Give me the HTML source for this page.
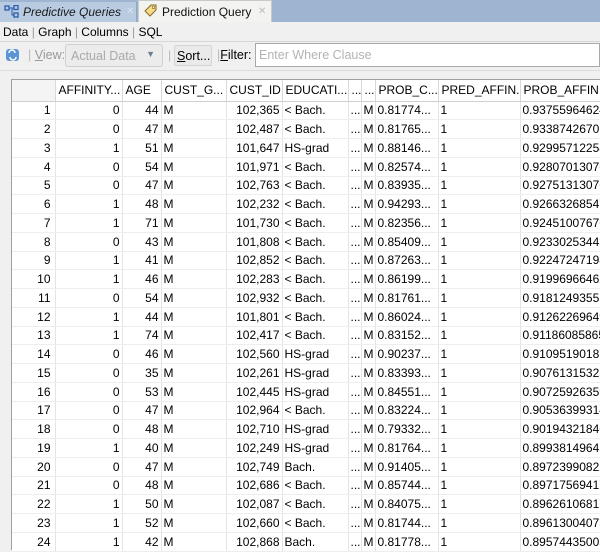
<!DOCTYPE html>
<html><head><style>
*{margin:0;padding:0;box-sizing:border-box}
body{width:600px;height:550px;overflow:hidden;background:#f0f0f0;font-family:"Liberation Sans",Tahoma,sans-serif;font-size:12px;color:#000;position:relative}
.abs{position:absolute}
#tabbar{left:0;top:0;width:600px;height:22px;background:#9db5d0}
#t1{left:0;top:2px;width:137px;height:20px;background:#b8cbe1;border-right:1px solid #8ea6c2}
#t2{left:138px;top:0;width:134px;height:22px;background:#f3f3f1;border:1px solid #c9c9c9;border-bottom:none}
.tt{font-size:12px;top:5px;white-space:nowrap}
#sub{top:25px;left:3px;font-size:12px;white-space:nowrap}
table{border-collapse:collapse;table-layout:fixed;position:absolute;left:12px;top:80px;background:#fff}
td{height:18.75px;border-right:1px solid #e4e4e4;border-bottom:1px solid #eeeeee;padding:0 2px;white-space:nowrap;overflow:hidden;font-size:12px}
tr.h td{height:21px;background:#fff;border-right:1px solid #d8d8d8;border-bottom:1px solid #d0d0d0;padding-left:3px}
td.r{text-align:right}
td.n{text-align:right;padding-right:4px;background:#fff}
</style></head><body>
<div id="tabbar" class="abs"></div>
<div id="t1" class="abs"></div>
<div id="t2" class="abs"></div>
<svg class="abs" style="left:4px;top:5px" width="16" height="13"><rect x="1" y="1" width="4" height="4" fill="none" stroke="#2a5db0" stroke-width="1.3"/><rect x="10" y="0.5" width="4" height="4" fill="none" stroke="#2a5db0" stroke-width="1.3"/><rect x="10" y="8" width="4" height="4" fill="none" stroke="#2a5db0" stroke-width="1.3"/><path d="M5 3H8V10H10M8 3H10" fill="none" stroke="#2a5db0"/></svg>
<div class="abs tt" style="left:23px;font-style:italic;color:#1a1a1a">Predictive Queries</div>
<div class="abs tt" style="left:126px;color:#d8e2ee;font-size:10px;top:6px">✕</div>
<svg class="abs" style="left:143px;top:3px" width="15" height="15"><path d="M2 8L8 2H13V7L7 13Z" fill="#f3dc8a" stroke="#8a6a20"/><circle cx="10.5" cy="4.5" r="1.2" fill="#fff" stroke="#8a6a20" stroke-width=".7"/></svg>
<div class="abs tt" style="left:162px;color:#111">Prediction Query</div>
<div class="abs tt" style="left:258px;color:#bbb;font-size:10px;top:6px">✕</div>
<div id="sub" class="abs">Data <span style="color:#999">|</span> Graph <span style="color:#999">|</span> Columns <span style="color:#999">|</span> SQL</div>
<div class="abs" style="left:0;top:41px;width:600px;height:1px;background:#d6d6d6"></div>
<svg class="abs" style="left:5px;top:47px" width="16" height="16"><rect x="1" y="2" width="13" height="12" rx="3" fill="#5b95d6"/><path d="M4 6a3 3 0 0 1 6 0M11 10a3 3 0 0 1-6 0" fill="none" stroke="#fff" stroke-width="1.5"/></svg>
<div class="abs" style="left:28px;top:48px;color:#999;font-size:12.5px"><span style="color:#bbb">|</span> <u>V</u>iew:</div>
<div class="abs" style="left:65px;top:44px;width:98px;height:23px;border:1px solid #cfcfcf;border-radius:3px;background:#ececec;color:#a9a9a9;padding:4px 5px;font-size:12.5px">Actual Data<span style="position:absolute;right:7px;top:4px;font-size:9px;color:#6a7e96">▼</span></div>
<div class="abs" style="left:168px;top:48px;color:#bbb">|</div>
<div class="abs" style="left:174px;top:45px;width:38px;height:21px;border:1px solid #d5d5d5;border-radius:2px;background:#eaeaea;padding:3px 2px;font-size:12.5px"><u>S</u>ort...</div>
<div class="abs" style="left:217px;top:48px;font-size:12.5px"><span style="color:#bbb">|</span><u>F</u>ilter:</div>
<div class="abs" style="left:255px;top:43px;width:345px;height:24px;border:1px solid #a8a8a8;background:#fff;color:#b3b3b3;padding:4px 3px;font-size:12.5px">Enter Where Clause</div>
<div class="abs" style="left:0;top:70px;width:600px;height:1px;background:#dcdcdc"></div>
<table style="width:620px">
<colgroup><col style="width:43px"><col style="width:67px"><col style="width:39px"><col style="width:65px"><col style="width:56px"><col style="width:66px"><col style="width:13px"><col style="width:14px"><col style="width:63px"><col style="width:82px"><col style="width:112px"></colgroup>
<tr class="h"><td style="background:#f4f4f4"></td><td>AFFINITY...</td><td>AGE</td><td>CUST_G...</td><td>CUST_ID</td><td>EDUCATI...</td><td>...</td><td>...</td><td>PROB_C...</td><td>PRED_AFFIN...</td><td>PROB_AFFINITY</td></tr>
<tr><td class="n">1</td><td class="r">0</td><td class="r">44</td><td>M</td><td class="r">102,365</td><td>&lt; Bach.</td><td>...</td><td>M</td><td>0.81774...</td><td>1</td><td>0.93755964624</td></tr>
<tr><td class="n">2</td><td class="r">0</td><td class="r">47</td><td>M</td><td class="r">102,487</td><td>&lt; Bach.</td><td>...</td><td>M</td><td>0.81765...</td><td>1</td><td>0.93387426701</td></tr>
<tr><td class="n">3</td><td class="r">1</td><td class="r">51</td><td>M</td><td class="r">101,647</td><td>HS-grad</td><td>...</td><td>M</td><td>0.88146...</td><td>1</td><td>0.92995712258</td></tr>
<tr><td class="n">4</td><td class="r">0</td><td class="r">54</td><td>M</td><td class="r">101,971</td><td>&lt; Bach.</td><td>...</td><td>M</td><td>0.82574...</td><td>1</td><td>0.92807013076</td></tr>
<tr><td class="n">5</td><td class="r">0</td><td class="r">47</td><td>M</td><td class="r">102,763</td><td>&lt; Bach.</td><td>...</td><td>M</td><td>0.83935...</td><td>1</td><td>0.92751313076</td></tr>
<tr><td class="n">6</td><td class="r">1</td><td class="r">48</td><td>M</td><td class="r">102,232</td><td>&lt; Bach.</td><td>...</td><td>M</td><td>0.94293...</td><td>1</td><td>0.92663268547</td></tr>
<tr><td class="n">7</td><td class="r">1</td><td class="r">71</td><td>M</td><td class="r">101,730</td><td>&lt; Bach.</td><td>...</td><td>M</td><td>0.82356...</td><td>1</td><td>0.92451007676</td></tr>
<tr><td class="n">8</td><td class="r">0</td><td class="r">43</td><td>M</td><td class="r">101,808</td><td>&lt; Bach.</td><td>...</td><td>M</td><td>0.85409...</td><td>1</td><td>0.92330253443</td></tr>
<tr><td class="n">9</td><td class="r">1</td><td class="r">41</td><td>M</td><td class="r">102,852</td><td>&lt; Bach.</td><td>...</td><td>M</td><td>0.87263...</td><td>1</td><td>0.92247247198</td></tr>
<tr><td class="n">10</td><td class="r">1</td><td class="r">46</td><td>M</td><td class="r">102,283</td><td>&lt; Bach.</td><td>...</td><td>M</td><td>0.86199...</td><td>1</td><td>0.91996966462</td></tr>
<tr><td class="n">11</td><td class="r">0</td><td class="r">54</td><td>M</td><td class="r">102,932</td><td>&lt; Bach.</td><td>...</td><td>M</td><td>0.81761...</td><td>1</td><td>0.91812493555</td></tr>
<tr><td class="n">12</td><td class="r">1</td><td class="r">44</td><td>M</td><td class="r">101,801</td><td>&lt; Bach.</td><td>...</td><td>M</td><td>0.86024...</td><td>1</td><td>0.91262269649</td></tr>
<tr><td class="n">13</td><td class="r">1</td><td class="r">74</td><td>M</td><td class="r">102,417</td><td>&lt; Bach.</td><td>...</td><td>M</td><td>0.83152...</td><td>1</td><td>0.91186085865</td></tr>
<tr><td class="n">14</td><td class="r">0</td><td class="r">46</td><td>M</td><td class="r">102,560</td><td>HS-grad</td><td>...</td><td>M</td><td>0.90237...</td><td>1</td><td>0.91095190187</td></tr>
<tr><td class="n">15</td><td class="r">0</td><td class="r">35</td><td>M</td><td class="r">102,261</td><td>HS-grad</td><td>...</td><td>M</td><td>0.83393...</td><td>1</td><td>0.90761315325</td></tr>
<tr><td class="n">16</td><td class="r">0</td><td class="r">53</td><td>M</td><td class="r">102,445</td><td>HS-grad</td><td>...</td><td>M</td><td>0.84551...</td><td>1</td><td>0.90725926359</td></tr>
<tr><td class="n">17</td><td class="r">0</td><td class="r">47</td><td>M</td><td class="r">102,964</td><td>&lt; Bach.</td><td>...</td><td>M</td><td>0.83224...</td><td>1</td><td>0.90536399314</td></tr>
<tr><td class="n">18</td><td class="r">0</td><td class="r">48</td><td>M</td><td class="r">102,710</td><td>HS-grad</td><td>...</td><td>M</td><td>0.79332...</td><td>1</td><td>0.90194321846</td></tr>
<tr><td class="n">19</td><td class="r">1</td><td class="r">40</td><td>M</td><td class="r">102,249</td><td>HS-grad</td><td>...</td><td>M</td><td>0.81764...</td><td>1</td><td>0.89938149645</td></tr>
<tr><td class="n">20</td><td class="r">0</td><td class="r">47</td><td>M</td><td class="r">102,749</td><td>Bach.</td><td>...</td><td>M</td><td>0.91405...</td><td>1</td><td>0.89723990822</td></tr>
<tr><td class="n">21</td><td class="r">0</td><td class="r">48</td><td>M</td><td class="r">102,686</td><td>&lt; Bach.</td><td>...</td><td>M</td><td>0.85744...</td><td>1</td><td>0.89717569417</td></tr>
<tr><td class="n">22</td><td class="r">1</td><td class="r">50</td><td>M</td><td class="r">102,087</td><td>&lt; Bach.</td><td>...</td><td>M</td><td>0.84075...</td><td>1</td><td>0.89626106817</td></tr>
<tr><td class="n">23</td><td class="r">1</td><td class="r">52</td><td>M</td><td class="r">102,660</td><td>&lt; Bach.</td><td>...</td><td>M</td><td>0.81744...</td><td>1</td><td>0.89613004075</td></tr>
<tr><td class="n">24</td><td class="r">1</td><td class="r">42</td><td>M</td><td class="r">102,868</td><td>Bach.</td><td>...</td><td>M</td><td>0.81778...</td><td>1</td><td>0.89574435005</td></tr>
</table>
<div class="abs" style="left:11px;top:79px;width:1px;height:471px;background:#a0a0a0"></div>
<div class="abs" style="left:11px;top:79px;width:589px;height:1px;background:#a0a0a0"></div>
</body></html>
